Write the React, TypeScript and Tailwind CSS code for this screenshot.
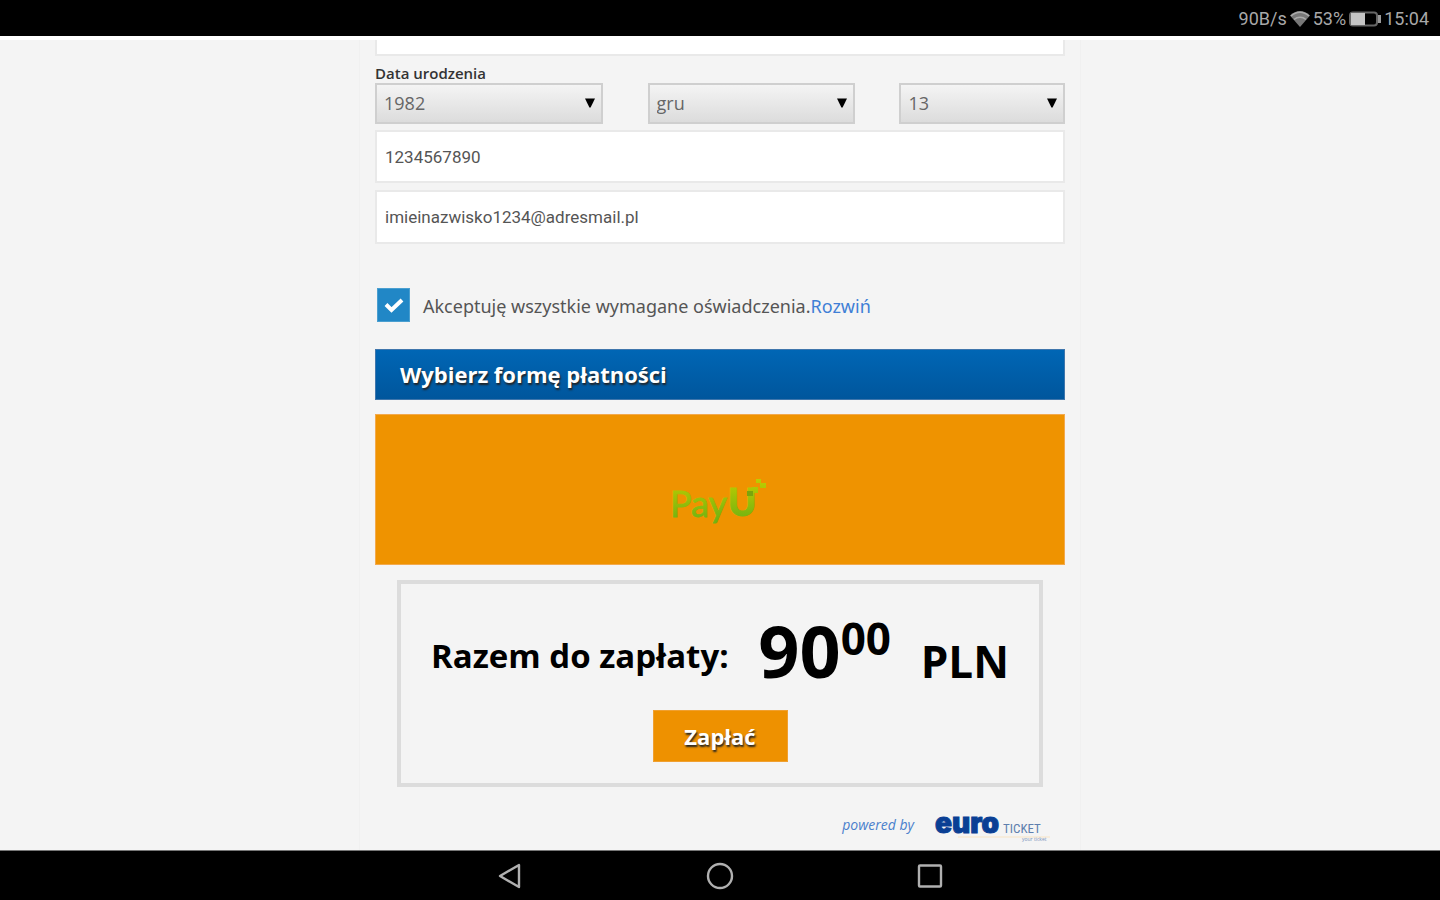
import React, { FC, ReactNode } from "react";

const SelectBox: FC<{
  label: string;
  value: string;
  className: string;
}> = ({ label, value, className }) => (
  <div className={`relative ${className}`}>
    <select
      aria-label={label}
      defaultValue={value}
      className="block h-[41px] w-full appearance-none border-2 border-[#cfcfcf] bg-linear-to-b from-[#f4f4f4] to-[#dcdcdc] px-[7px] pb-[2px] text-lg leading-6 text-[#666]"
    >
      <option>{value}</option>
    </select>
    <svg
      viewBox="0 0 10 10"
      className="pointer-events-none absolute top-[15px] right-2 h-[10px] w-[10px]"
    >
      <path d="M0 0.5h10L5.6 9.5H4.4z" fill="#000" />
    </svg>
  </div>
);

const PayULogo = () => (
  <svg viewBox="0 0 98 56" className="h-14 w-[98px]" role="img">
    <defs>
      <linearGradient id="payu" gradientUnits="userSpaceOnUse" x1="0" y1="8" x2="0" y2="48">
        <stop offset="0" stopColor="#bfcc00" />
        <stop offset="1" stopColor="#71b312" />
      </linearGradient>
    </defs>
    <g fill="url(#payu)" stroke="url(#payu)" fontFamily="Lato, sans-serif">
      <text x="-1" y="45" fontSize="36" strokeWidth="0.800">
        Pay
      </text>
      <text x="57" y="44" fontSize="38" fontWeight="900" strokeWidth="1">
        U
      </text>
      <g stroke="none">
        <rect x="81" y="15" width="6" height="6" />
        <rect x="85" y="7" width="5" height="4" />
        <rect x="89" y="11" width="6" height="5" />
      </g>
    </g>
    <rect x="76" y="19" width="6" height="5" fill="#7aa50c" />
  </svg>
);

const EuroTicketLogo = () => (
  <svg viewBox="0 0 120 36" className="h-9 w-[120px]" role="img">
    <text
      x="1"
      y="26"
      fontFamily="Inter, sans-serif"
      fontSize="28"
      fontWeight="900"
      fill="#0a3f94"
      stroke="#0a3f94"
    >
      euro
    </text>
    <text
      x="69"
      y="26"
      fontFamily="'Roboto Condensed', 'Liberation Sans', sans-serif"
      fontSize="13"
      fill="#5f7fae"
    >
      TICKET
    </text>
    <path d="M24 30h92" stroke="#f6ecdc" strokeWidth="2" />
    <text x="88" y="34" fontFamily="'Open Sans', sans-serif" fontSize="5" fill="#7a93bb">
      your ticket
    </text>
  </svg>
);

const NavButton: FC<{ label: string; children: ReactNode }> = ({ label, children }) => (
  <button type="button" aria-label={label} className="flex w-[210px] justify-center">
    <svg
      viewBox="0 0 28 28"
      className="h-7 w-7"
      fill="none"
      stroke="#b0b0b0"
      strokeWidth="2.4"
      strokeLinejoin="round"
    >
      {children}
    </svg>
  </button>
);

const inputStyle =
  "block w-full border-2 border-[#e9e9e9] bg-white px-2 font-[Roboto,sans-serif] text-[17px] leading-6 text-[#555]";

const App: FC = () => {
  return (
    <div className="flex min-h-screen flex-col bg-[#f4f4f4] font-['Open_Sans',sans-serif]">
      <header className="flex h-10 items-center justify-end gap-[3px] border-b-4 border-white bg-black pr-[11px] pt-[2px] font-[Roboto,sans-serif] text-lg leading-6 text-[#a8a8a8]">
        <span>90B/s</span>
        <svg viewBox="0 0 20 18" className="h-[18px] w-5">
          <path d="M0 5.5C6-.5 14-.5 20 5.5L10 17z" fill="#777" />
          <path
            d="M1 6C6.500 1 13.500 1 19 6M4 9.500C7.500 6.500 12.500 6.500 16 9.500"
            fill="none"
            stroke="#aaa"
            strokeWidth="1.500"
          />
        </svg>
        <span>53%</span>
        <svg viewBox="0 0 32 16" className="h-4 w-8">
          <rect x="1" y="1.500" width="27" height="13" rx="3" fill="none" stroke="#666" strokeWidth="2" />
          <rect x="2" y="2" width="14" height="12" fill="#c4c4c4" />
          <rect x="29" y="4" width="3" height="8" fill="#999" />
        </svg>
        <span>15:04</span>
      </header>

      <main className="mx-auto w-full max-w-[722px] flex-1 border-x border-[#f0f0f0] px-[15px]">
        <form onSubmit={(e) => e.preventDefault()}>
          <input aria-label="Nazwisko" className={`${inputStyle} h-4 border-t-0`} />

          <fieldset className="mt-[7px]">
            <legend className="text-[15px] font-semibold leading-5 text-[#333]">Data urodzenia</legend>
            <div className="flex justify-between">
              <SelectBox label="Rok" value="1982" className="w-[33%]" />
              <SelectBox label="Miesiąc" value="gru" className="w-[30%]" />
              <SelectBox label="Dzień" value="13" className="w-[24%]" />
            </div>
          </fieldset>

          <input
            type="tel"
            aria-label="Telefon"
            defaultValue="1234567890"
            className={`${inputStyle} mt-[6px] h-[53px]`}
          />
          <input
            type="email"
            aria-label="E-mail"
            defaultValue="imieinazwisko1234@adresmail.pl"
            className={`${inputStyle} mt-[7px] h-[54px]`}
          />

          <div className="mt-11 flex items-center">
            <span className="relative ml-[2px] h-[34px] w-[33px]">
              <input
                id="consent"
                type="checkbox"
                defaultChecked
                className="block h-full w-full appearance-none border border-[#4a9fd0] bg-[#2187c6]"
              />
              <svg
                viewBox="0 0 33 34"
                className="pointer-events-none absolute inset-0 h-full w-full"
                fill="none"
                stroke="#fff"
                strokeWidth="4"
              >
                <path d="M9 16.500l5.500 5.500L25 12" />
              </svg>
            </span>
            <p className="ml-[13px] pt-[2px] font-['Noto_Sans',sans-serif] text-lg leading-6 text-[#555]">
              <label htmlFor="consent">Akceptuję wszystkie wymagane oświadczenia.</label>
              <a href="#oswiadczenia" className="text-[#3f7fd6]">
                Rozwiń
              </a>
            </p>
          </div>

          <h2 className="mt-[27px] flex h-[51px] items-center border border-[#3f76ac] bg-linear-to-b from-[#0066b5] to-[#00569c] px-6 pb-[2px] text-[22px] font-bold leading-8 text-white [text-shadow:1px_2px_2px_#222]">
            Wybierz formę płatności
          </h2>

          <button
            type="button"
            aria-label="PayU"
            className="mt-[14px] flex h-[151px] w-full items-center justify-center border border-[#f3a94c] bg-[#ef9300] pt-5"
          >
            <PayULogo />
          </button>

          <section className="mx-[22px] mt-[15px] flex flex-col items-center border-4 border-[#dcdcdc] pb-[21px] text-black">
            <div className="flex w-full items-baseline justify-between px-[30px] pt-6 font-bold">
              <span className="self-end text-[33px] leading-[72px]">Razem do zapłaty:</span>
              <span className="flex items-start text-[72px] leading-[84px]">
                90
                <sup className="top-0 text-[44px] leading-[60px]">00</sup>
              </span>
              <span className="text-[44px] leading-[60px]">PLN</span>
            </div>
            <button
              type="submit"
              className="mt-[18px] h-[52px] w-[135px] border border-[#f0a030] bg-[#ee9100] text-[22px] font-bold leading-8 text-white [text-shadow:1px_2px_2px_#222]"
            >
              Zapłać
            </button>
          </section>

          <footer className="mt-5 flex items-center justify-end gap-5 pr-[11px]">
            <span className="text-sm italic leading-5 text-[#4a80cc]">powered by</span>
            <EuroTicketLogo />
          </footer>
        </form>
      </main>

      <nav className="flex h-[50px] items-center justify-center border-t border-[#777] bg-black">
        <NavButton label="Wstecz">
          <path d="M23 3v22L4 14z" />
        </NavButton>
        <NavButton label="Ekran główny">
          <circle cx="14" cy="14" r="12" />
        </NavButton>
        <NavButton label="Ostatnie">
          <rect x="3" y="3.500" width="22" height="21" rx="1" />
        </NavButton>
      </nav>
    </div>
  );
};

export default App;
